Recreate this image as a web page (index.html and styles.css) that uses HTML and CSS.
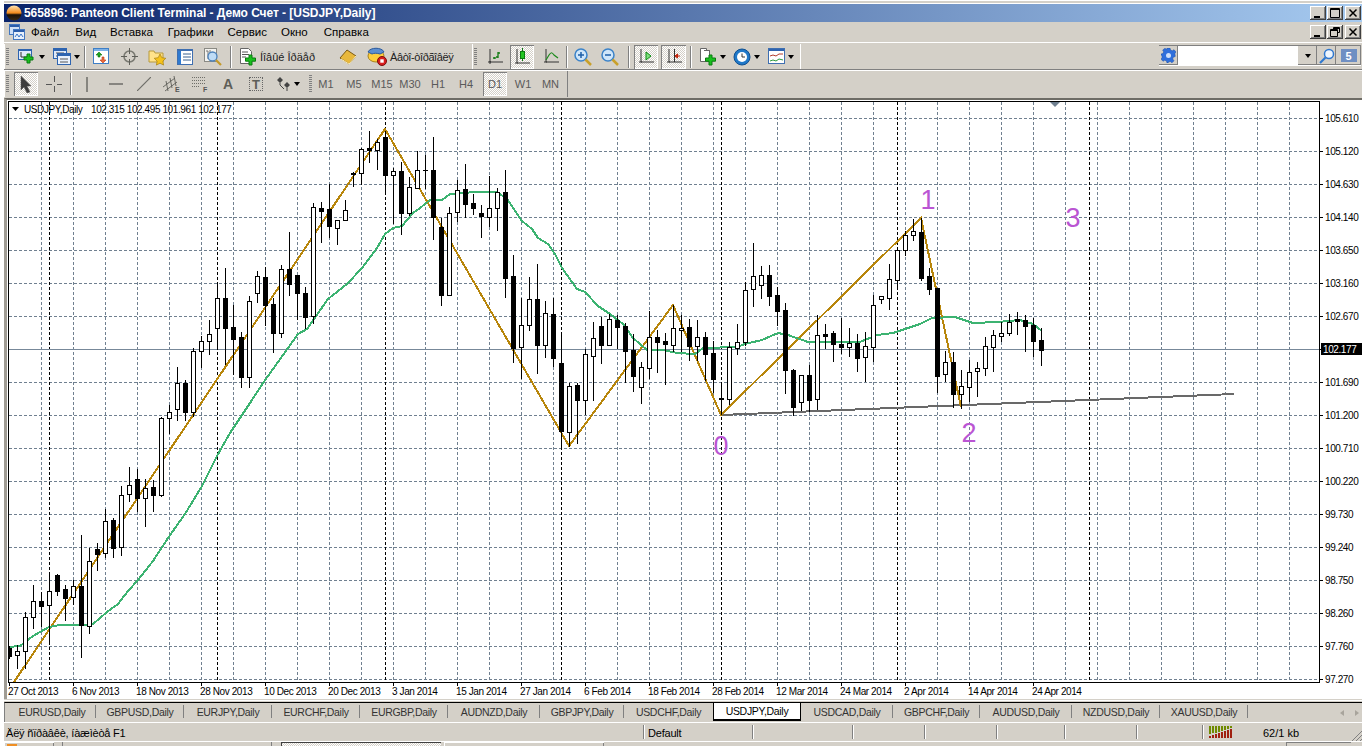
FILE: index.html
```html
<!DOCTYPE html>
<html lang="ru">
<head>
<meta charset="utf-8">
<title>565896: Panteon Client Terminal</title>
<link rel="stylesheet" href="styles.css">
</head>
<body>
<div class="frame-top"></div>
<div class="window">
  <header class="titlebar">
    <svg class="app-icon" width="16" height="16" viewBox="0 0 16 16"><defs><linearGradient id="og" x1="0" y1="0" x2="0" y2="1"><stop offset="0" stop-color="#ffe2b0"/><stop offset=".5" stop-color="#f28a1c"/><stop offset=".62" stop-color="#1b1208"/><stop offset="1" stop-color="#3a2a14"/></linearGradient></defs><ellipse cx="8" cy="8" rx="7.5" ry="7.5" fill="url(#og)"/></svg>
    <span class="title-text">565896: Panteon Client Terminal - Демо Счет - [USDJPY,Daily]</span>
    <div class="winbtns">
      <span class="winbtn"><svg width="14" height="12" viewBox="0 0 14 12"><path d="M3 9h6v2H3z" fill="#000"/></svg></span>
      <span class="winbtn"><svg width="14" height="12" viewBox="0 0 14 12"><path d="M2.5 1.500h9v9h-9zM2.500 2.500h9" fill="none" stroke="#000"/></svg></span>
      <span class="winbtn"><svg width="14" height="12" viewBox="0 0 14 12"><path d="M3.500 2.500l7 7M10.500 2.500l-7 7" stroke="#000" stroke-width="1.500"/></svg></span>
    </div>
  </header>

  <nav class="menubar">
    <svg class="mdi-icon" width="16" height="16" viewBox="0 0 16 16"><rect x=".5" y=".5" width="10" height="10" fill="#cfe0f7" stroke="#4478c0"/><path d="M1 2h9" stroke="#2a5caa" stroke-width="2"/><rect x="4.500" y="5.500" width="11" height="10" fill="#e8f0fb" stroke="#4478c0"/><path d="M5 7h10" stroke="#2a5caa" stroke-width="2"/><path d="M6 13l2-3 2 3 2-3 2 3" fill="none" stroke="#3a76c8"/></svg>
    <span class="mi m1">Файл</span><span class="mi m2">Вид</span><span class="mi m3">Вставка</span><span class="mi m4">Графики</span><span class="mi m5">Сервис</span><span class="mi m6">Окно</span><span class="mi m7">Справка</span>
    <div class="winbtns mdi">
      <span class="winbtn"><svg width="14" height="12" viewBox="0 0 14 12"><path d="M3 9h6v2H3z" fill="#000"/></svg></span>
      <span class="winbtn"><svg width="14" height="12" viewBox="0 0 14 12"><path d="M5.500 3.500V1.500h6v5h-2M2.500 3.500h7v7h-7zM2.500 4.500h7M5.500 2.500h6" fill="none" stroke="#000"/></svg></span>
      <span class="winbtn"><svg width="14" height="12" viewBox="0 0 14 12"><path d="M3.500 2.500l7 7M10.500 2.500l-7 7" stroke="#000" stroke-width="1.500"/></svg></span>
    </div>
  </nav>

  <div class="row row1">
    <div class="group g-main">
      <span class="handle"></span>
      <span class="tool w35"><svg width="18" height="16" viewBox="0 0 18 16"><rect x=".5" y=".5" width="13" height="10" fill="#dfeafa" stroke="#2e64b0"/><path d="M1 1.500h12" stroke="#2e64b0"/><path d="M3 3v5h7" fill="none" stroke="#333"/><path d="M9 5h3v3h3v3h-3v3H9v-3H6V8h3z" fill="#19c01e" stroke="#0a7a10"/></svg><i class="caret"></i></span>
      <span class="tool w35"><svg width="18" height="17" viewBox="0 0 18 17"><rect x=".5" y=".5" width="13" height="10" fill="#dfeafa" stroke="#2e64b0"/><path d="M1 2h12" stroke="#2e64b0" stroke-width="2"/><path d="M3 5h8M3 8h8" stroke="#555"/><rect x="4.500" y="5.500" width="13" height="11" fill="#e9f1fc" stroke="#2e64b0"/><path d="M5 7h12" stroke="#2e64b0" stroke-width="2"/><path d="M7 11h8M7 14h8" stroke="#555"/></svg><i class="caret"></i></span>
      <span class="sep"></span>
      <span class="tool w28"><svg width="17" height="17" viewBox="0 0 17 17"><rect x=".5" y=".5" width="15" height="15" fill="#fff" stroke="#3f7fc6"/><path d="M1 2h14" stroke="#7db1e6" stroke-width="2"/><path d="M5 9V7H3l3-3 3 3H7v2z" fill="#1da51d" stroke="#0e700e" stroke-width=".6"/><path d="M9 9v3H7l3 3 3-3h-2V9z" fill="#ee6a3c" stroke="#b53a10" stroke-width=".6"/></svg></span>
      <span class="tool w28"><svg width="17" height="17" viewBox="0 0 17 17"><circle cx="8.500" cy="8.500" r="5.500" fill="none" stroke="#7a7a72" stroke-width="1.500"/><path d="M8.500 0v6M8.500 11v6M0 8.500h6M11 8.500h6" stroke="#5e5e58"/></svg></span>
      <span class="tool w28"><svg width="19" height="18" viewBox="0 0 19 18"><path d="M1 3h5l1 2h8v9H1z" fill="#ffe28a" stroke="#b79a3c"/><path d="M12 6l1.800 3.700 4 .6-2.900 2.800.7 4-3.600-1.900-3.600 1.900.7-4-2.900-2.800 4-.6z" fill="#f5c21b" stroke="#a67f10" stroke-width=".7"/></svg></span>
      <span class="tool w28"><svg width="16" height="16" viewBox="0 0 16 16"><rect x=".5" y=".5" width="15" height="15" fill="#fff" stroke="#3f6fb0"/><path d="M1 1.500h14" stroke="#3f6fb0"/><path d="M1 2h3v13H1z" fill="#2f7ad0"/><path d="M6 5h8M6 8h8M6 11h8" stroke="#39618f"/></svg></span>
      <span class="tool w28"><svg width="18" height="18" viewBox="0 0 18 18"><rect x=".5" y=".5" width="12" height="13" fill="#f4f3ef" stroke="#8a8a84"/><path d="M2 3h2v8M6 2v7" stroke="#777" fill="none"/><circle cx="8.500" cy="8.500" r="4.500" fill="#bfdcf6" stroke="#4d82bb" stroke-width="1.300"/><path d="M12 12l5 5" stroke="#c49a2a" stroke-width="2.200"/></svg></span>
      <span class="sep ml3"></span>
      <span class="tool w85"><svg class="ic-l" width="18" height="18" viewBox="0 0 18 18"><path d="M1.500.5h8l3 3v12h-11z" fill="#fff" stroke="#666"/><path d="M3 4h6M3 6.500h7M3 9h4" stroke="#555"/><path d="M10 7h3v3h3.500v3.200H13V17h-3v-3.800H6.500V10H10z" fill="#19c01e" stroke="#0a7a10"/></svg><span class="tool-label lbl-order">Íîâûé Îðäåð</span></span>
      <span class="tool w30 ml15"><svg width="18" height="16" viewBox="0 0 18 16"><path d="M1 9l7-8 9 6-7 8z" fill="#e8b83c" stroke="#7d5a10"/><path d="M2 10l8 5 7-8" fill="none" stroke="#fff0b8"/></svg></span>
      <span class="tool w95"><svg class="ic-l" width="20" height="19" viewBox="0 0 20 19"><ellipse cx="9" cy="9" rx="8" ry="6" fill="#ffcf3d" stroke="#a8841b"/><path d="M1 5c2-5 14-5 16 0l-4 2c-3-1-6-1-8 0z" fill="#5d8fd0" stroke="#2c5a9c"/><circle cx="15" cy="14" r="4.500" fill="#d81e1e" stroke="#7b0c0c"/><rect x="13.300" y="12.300" width="3.400" height="3.400" fill="#fff"/></svg><span class="tool-label">Àâòî-òîðãîâëÿ</span></span>
    </div>
    <div class="group g-chart">
      <span class="handle"></span>
      <span class="tool w26"><svg width="16" height="16" viewBox="0 0 16 16"><path d="M3 0v13h13M1 13h3M3 15v-3" fill="none" stroke="#333"/><path d="M8 8V10M8 9h-2M11 3v6M11 4h2M11 8H9" fill="none" stroke="#107a10" stroke-width="1.300"/></svg></span>
      <span class="tool w24 on ml2"><svg width="16" height="18" viewBox="0 0 16 18"><path d="M3 1v14h13M1 15h3" fill="none" stroke="#333"/><path d="M8.500 0v13" stroke="#0a7a10"/><rect x="6.500" y="3.500" width="4" height="7" fill="#22c522" stroke="#0a7a10"/></svg></span>
      <span class="tool w27 ml3"><svg width="16" height="16" viewBox="0 0 16 16"><path d="M3 0v13h13M1 13h3" fill="none" stroke="#333"/><path d="M3 11l3-5c2-3 3-3 5 0l4 3" fill="none" stroke="#1b8a1b" stroke-width="1.200"/></svg></span>
      <span class="sep ml2"></span>
      <span class="tool w27"><svg width="18" height="18" viewBox="0 0 18 18"><circle cx="7" cy="7" r="6" fill="#cfe6fa" stroke="#3b83c9" stroke-width="1.500"/><path d="M4 7h6M7 4v6" stroke="#1e5fa8" stroke-width="1.500"/><path d="M11.500 11.500l5.500 5.500" stroke="#c9a02a" stroke-width="2.500"/></svg></span>
      <span class="tool w28"><svg width="18" height="18" viewBox="0 0 18 18"><circle cx="7" cy="7" r="6" fill="#cfe6fa" stroke="#3b83c9" stroke-width="1.500"/><path d="M4 7h6" stroke="#1e5fa8" stroke-width="1.500"/><path d="M11.500 11.500l5.500 5.500" stroke="#c9a02a" stroke-width="2.500"/></svg></span>
      <span class="sep ml4"></span>
      <span class="tool w24 on ml3"><svg width="16" height="16" viewBox="0 0 16 16"><path d="M3 0v13h13M1 13h3" fill="none" stroke="#333"/><path d="M8 3l5 4-5 4z" fill="#7fe07f" stroke="#0a8a10"/></svg></span>
      <span class="tool w25 on ml3"><svg width="16" height="16" viewBox="0 0 16 16"><path d="M3 0v13h13M1 13h3M8.500 0v13" fill="none" stroke="#333"/><path d="M9 7h5M11.500 5l-2.500 2 2.500 2z" fill="#e4351a" stroke="#c0240c"/></svg></span>
      <span class="sep ml4"></span>
      <span class="tool w32 ml3"><svg width="18" height="18" viewBox="0 0 18 18"><path d="M1.500.5h6v2h3v11h-9z" fill="#fff" stroke="#666"/><path d="M5 2.500h5.500v11" fill="none" stroke="#666"/><path d="M10 7h3v3h3.500v3.200H13V17h-3v-3.800H6.500V10H10z" fill="#19c01e" stroke="#0a7a10"/></svg><i class="caret"></i></span>
      <span class="tool w32 ml2"><svg width="18" height="18" viewBox="0 0 18 18"><circle cx="9" cy="9" r="8" fill="#1f78c8" stroke="#0f4f90"/><circle cx="9" cy="9" r="5" fill="#fff"/><path d="M9 5.500V9h3" fill="none" stroke="#333"/></svg><i class="caret"></i></span>
      <span class="tool w32 ml3"><svg width="17" height="17" viewBox="0 0 17 17"><rect x=".5" y=".5" width="16" height="15" fill="#fff" stroke="#3f6fb0"/><path d="M1 2h15" stroke="#2e64b0" stroke-width="2"/><path d="M2 8l3-1 3 1 3-2 4 0" fill="none" stroke="#b13c2c"/><path d="M2 13l3-1 3 1 3-2 4 1" fill="none" stroke="#2c9a3c"/></svg><i class="caret"></i></span>
    </div>
    <div class="search">
      <span class="sb-btn gear"><svg width="15" height="15" viewBox="0 0 15 15"><path d="M6 0h3l.5 2 1.800.8L13 1.700 15 4l-1.200 1.700.4 1.800 0 1-2 .8-.5 1.700 1.300 1.800-2 2-1.700-1.300-1.800.5L7 15H6l-.5-2-1.800-.8L2 13.300 0 11l1.200-1.700L.8 7.500 0 7V6l2-.5.600-1.700L1.700 2 4 .3l1.600 1.200z" fill="#2f6fdc" stroke="#1b4ea8" stroke-width=".5"/><circle cx="7.500" cy="7.500" r="2.500" fill="#cfe0fb"/></svg></span>
      <span class="sb-input"></span>
      <span class="sb-btn drop"><i class="caret"></i></span>
      <span class="sb-btn find"><svg width="16" height="16" viewBox="0 0 16 16"><circle cx="10" cy="6" r="4.500" fill="#eef5fd" stroke="#2f78d0" stroke-width="1.500"/><path d="M6.500 9.500L1 15" stroke="#2f78d0" stroke-width="2.200"/></svg></span>
      <span class="sb-btn chat"><span class="bubble">5</span></span>
    </div>
  </div>

  <div class="row row2">
    <div class="group g-tools">
      <span class="handle"></span>
      <span class="tool w24 on"><svg width="14" height="18" viewBox="0 0 14 18"><path d="M2 1v14l3-3 3 6 3-1-3-6h4z" fill="#3d3d3d" stroke="#555" stroke-width=".5"/></svg></span>
      <span class="tool w25 ml3"><svg width="16" height="16" viewBox="0 0 16 16"><path d="M8.500 0v6M8.500 10v6M0 8.500h6M11 8.500h5" stroke="#555"/></svg></span>
      <span class="sep ml4"></span>
      <span class="tool w28"><svg width="4" height="15" viewBox="0 0 4 15"><path d="M2 0v15" stroke="#5e5e58" stroke-width="1.300"/></svg></span>
      <span class="tool w28 ml1"><svg width="14" height="4" viewBox="0 0 14 4"><path d="M0 2h14" stroke="#5e5e58" stroke-width="1.300"/></svg></span>
      <span class="tool w28"><svg width="14" height="14" viewBox="0 0 14 14"><path d="M0 14L14 0" stroke="#6e6e68" stroke-width="1.200"/></svg></span>
      <span class="tool w28"><svg width="18" height="17" viewBox="0 0 18 17"><path d="M0 11l12-9M2 15L14 6M3 5l2 10M7 2l2 10M11 0l2 10" stroke="#5e5e58" stroke-width=".9"/><text x="12" y="16" class="ic-letter">E</text></svg></span>
      <span class="tool w28"><svg width="16" height="16" viewBox="0 0 16 16"><path d="M0 1.500h14M0 4.500h14M0 7.500h14M0 10.500h8" stroke="#6e6e68" stroke-dasharray="1 1"/><text x="11" y="15.500" class="ic-letter">F</text></svg></span>
      <span class="tool w28 letter-a">A</span>
      <span class="tool w28"><span class="t-box">T</span></span>
      <span class="tool w35"><svg width="15" height="14" viewBox="0 0 15 14"><path d="M4 0l3 3-3 3-3-3zM11 5l3 3-3 3-3-3z" fill="#444"/><path d="M4 6v2M4 8l4 4M11 11v3" stroke="#444"/></svg><i class="caret"></i></span>
      <span class="handle h-tight"></span>
      <span class="tool w28 tf">M1</span><span class="tool w28 tf">M5</span><span class="tool w28 tf">M15</span><span class="tool w28 tf">M30</span><span class="tool w28 tf">H1</span><span class="tool w28 tf">H4</span>
      <span class="tool w24 tf on ml3">D1</span><span class="tool w28 tf ml2">W1</span><span class="tool w27 tf">MN</span>
    </div>
  </div>

  <main class="chart-host">
    <svg class="chart" width="1355" height="599" viewBox="7 99 1355 599">
      <defs><clipPath id="plot"><rect x="9" y="101" width="1311" height="580"/></clipPath></defs>
      <g clip-path="url(#plot)">
        <g id="grid"></g>
        <path class="bid-line" d="M9 348.500H1320"/>
        <polyline class="trend" points="721,414 1234,393"/>
        <polyline class="zigzag" points="14,681 385,128 569,445 673,304 721,414 921,217 961,406"/>
        <polyline class="ma" points="9,646 20,645 33,635 49,626 60,624 83,624 93,623 107,611 118,603 128,590 138,579 153,560 168,537 185,513 202,485 217,455 230,432 252,399 263,382 273,368 288,347 298,333 307,328 328,298 347,283 362,267 377,247 385,233 393,227 402,225 413,212 420,207 430,199 442,199 450,193 463,192 475,191 497,191 507,198 522,220 532,228 538,237 548,243 555,253 562,267 577,288 585,291 598,305 610,313 623,323 633,337 647,349 663,349 677,352 695,353 703,347 737,346 745,343 762,339 778,332 788,334 808,341 823,341 860,341 877,334 893,332 920,323 932,317 955,316 973,322 997,321 1020,319 1033,323 1042,330"/>
        <g id="candles"></g>
        <polygon class="shift-mark" points="1050,101 1060,101 1055,106"/>
      </g>
      <rect class="plot-frame" x="8.500" y="100.500" width="1311" height="581"/>
      <g id="ticks"></g>
      <polygon points="12,106 19,106 15.500,110"/>
      <text class="ax" x="24" y="112">USDJPY,Daily</text>
      <text class="ax" x="91" y="112">102.315 102.495 101.961 102.177</text>
      <text class="mark" x="928" y="208" text-anchor="middle">1</text>
      <text class="mark" x="969" y="441" text-anchor="middle">2</text>
      <text class="mark" x="1073" y="226" text-anchor="middle">3</text>
      <text class="mark" x="721" y="454" text-anchor="middle">0</text>
      <g class="prices">
        <text class="ax" x="1325" y="121">105.610</text><text class="ax" x="1325" y="154">105.120</text><text class="ax" x="1325" y="187">104.630</text><text class="ax" x="1325" y="220">104.140</text><text class="ax" x="1325" y="253">103.650</text><text class="ax" x="1325" y="286">103.160</text><text class="ax" x="1325" y="319">102.670</text><text class="ax" x="1325" y="385">101.690</text><text class="ax" x="1325" y="418">101.200</text><text class="ax" x="1325" y="451">100.710</text><text class="ax" x="1325" y="484">100.220</text><text class="ax" x="1325" y="517">99.730</text><text class="ax" x="1325" y="550">99.240</text><text class="ax" x="1325" y="583">98.750</text><text class="ax" x="1325" y="616">98.260</text><text class="ax" x="1325" y="649">97.760</text><text class="ax" x="1325" y="682">97.270</text>
        <rect x="1321" y="342" width="41" height="12"/>
        <text class="ax bid-text" x="1323" y="352">102.177</text>
      </g>
      <g class="dates">
        <text class="ax" x="8" y="694">27 Oct 2013</text><text class="ax" x="72" y="694">6 Nov 2013</text><text class="ax" x="136" y="694">18 Nov 2013</text><text class="ax" x="200" y="694">28 Nov 2013</text><text class="ax" x="264" y="694">10 Dec 2013</text><text class="ax" x="328" y="694">20 Dec 2013</text><text class="ax" x="392" y="694">3 Jan 2014</text><text class="ax" x="456" y="694">15 Jan 2014</text><text class="ax" x="520" y="694">27 Jan 2014</text><text class="ax" x="584" y="694">6 Feb 2014</text><text class="ax" x="648" y="694">18 Feb 2014</text><text class="ax" x="712" y="694">28 Feb 2014</text><text class="ax" x="776" y="694">12 Mar 2014</text><text class="ax" x="840" y="694">24 Mar 2014</text><text class="ax" x="904" y="694">2 Apr 2014</text><text class="ax" x="968" y="694">14 Apr 2014</text><text class="ax" x="1032" y="694">24 Apr 2014</text>
      </g>
    </svg>
  </main>

  <div class="tabs-wrap">
    <div class="tabs">
      <span class="tab">EURUSD,Daily</span><span class="tab">GBPUSD,Daily</span><span class="tab">EURJPY,Daily</span><span class="tab">EURCHF,Daily</span><span class="tab">EURGBP,Daily</span><span class="tab w92t">AUDNZD,Daily</span><span class="tab w84t">GBPJPY,Daily</span><span class="tab w89t plain">USDCHF,Daily</span><span class="tab active">USDJPY,Daily</span><span class="tab w92t">USDCAD,Daily</span><span class="tab w87t">GBPCHF,Daily</span><span class="tab w92t">AUDUSD,Daily</span><span class="tab">NZDUSD,Daily</span><span class="tab">XAUUSD,Daily</span>
      <span class="tab-nav"><i class="tri-l"></i><i class="tri-r"></i></span>
    </div>
  </div>

  <footer class="status">
    <span class="cell c1">Äëÿ ñïðàâêè, íàæìèòå F1</span>
    <span class="cell c2">Default</span>
    <span class="cell c3"></span><span class="cell c4"></span><span class="cell c4"></span><span class="cell c5"></span><span class="cell c4"></span><span class="cell c6"></span>
    <span class="conn"><svg width="24" height="12" viewBox="0 0 24 12"><path d="M1 0h2v8H1zM4 0h2v7H4zM7 0h2v7H7zM10 0h2v6h-2zM13 0h2v5h-2zM16 0h2v4h-2zM19 0h2v3h-2zM22 0h2v2h-2z" fill="#6f8a00"/><path d="M1 10h2v2H1zM4 9h2v3H4zM7 8h2v4H7zM10 7h2v5h-2zM13 6h2v6h-2zM16 5h2v7h-2zM19 4h2v8h-2zM22 3h2v9h-2z" fill="#a02010"/></svg></span>
    <span class="traffic">62/1 kb</span>
    <svg class="grip" width="10" height="10" viewBox="0 0 10 10"><path d="M0 10L10 0M4 10l6-6M8 10l2-2" stroke="#808080"/></svg>
  </footer>

  <div class="taskbar">
    <span class="tb-item t-a"><i class="t-dot"></i></span>
    <span class="tb-mark t-b"></span>
    <span class="tb-item t-sel"></span>
    <span class="tb-item t-c"></span>
    <span class="tb-item t-d"></span>
  </div>
</div>
<script src="chart.js"></script>
</body>
</html>
```
FILE: styles.css
```css
* { box-sizing: border-box; }
html, body { margin: 0; height: 100%; background: #fff; overflow: hidden; }
body { font-family: "Liberation Sans", Arial, sans-serif; font-size: 11px; color: #000; }

.frame-top { height: 2px; margin: 1px 6px 1px 4px; background: #d4d0c8; }
.window { width: 1358px; height: 742px; margin-left: 4px; background: #d4d0c8; overflow: hidden; }

/* title */
.titlebar { height: 18px; display: flex; align-items: center; padding-left: 2px; background: linear-gradient(90deg, #0a246a, #a6caf0); }
.app-icon { flex: none; }
.title-text { margin-left: 2px; font-family: "Liberation Sans", sans-serif; font-weight: 700; font-size: 12px; letter-spacing: -.05px; color: #fff; white-space: nowrap; }
.winbtns { display: flex; margin-left: auto; margin-right: 1px; gap: 2px; }
.winbtn { width: 16px; height: 14px; display: flex; align-items: center; justify-content: center; background: #d4d0c8; box-shadow: inset -1px -1px #404040, inset 1px 1px #fff, inset -2px -2px #808080; }
.winbtn:first-child { margin-right: -1px; }

/* menu */
.menubar { height: 20px; display: flex; align-items: center; position: relative; border-bottom: 0; }
.mdi-icon { margin-left: 5px; flex: none; }
.mi { font-size: 11.500px; color: #000; white-space: nowrap; }
.m1 { margin-left: 6px; } .m2 { margin-left: 16px; } .m3 { margin-left: 14px; } .m4 { margin-left: 15px; }
.m5 { margin-left: 14px; } .m6 { margin-left: 14px; } .m7 { margin-left: 16px; }

/* toolbars */
.row { display: flex; }
.row1 { height: 28px; border-top: 1px solid #fff; border-bottom: 1px solid #808080; padding-top: 1px; box-shadow: 0 1px #fff; position: relative; }
.row2 { height: 26px; margin-top: 1px; padding-top: 0; }
.group { display: flex; align-items: center; height: 100%; }
.g-main { width: 468px; border-left: 1px solid #fff; }
.g-chart { width: 329px; border-left: 1px solid #fff; border-right: 1px solid #fff; }
.g-tools { width: 564px; border-left: 1px solid #fff; border-right: 1px solid #808080; }
.handle { flex: none; width: 9px; height: 18px; background: repeating-linear-gradient(180deg, #808080 0 1px, #d4d0c8 1px 2px) 1px 0 / 3px 100% no-repeat; }
.h-tight { width: 7px; background-position: 4px 0; }

.tool { flex: none; height: 24px; display: flex; align-items: center; justify-content: center; gap: 3px; }
.tool.on { background: repeating-conic-gradient(#fff 0 25%, #d4d0c8 0 50%) 0 0 / 2px 2px; box-shadow: inset 1px 1px #808080, inset -1px -1px #fff; }
.w24 { width: 24px; } .w25 { width: 25px; } .w26 { width: 26px; } .w27 { width: 27px; } .w28 { width: 28px; }
.w30 { width: 30px; } .w32 { width: 32px; } .w35 { width: 35px; } .w85 { width: 85px; justify-content: flex-start; padding-left: 6px; } .w95 { width: 95px; justify-content: flex-start; padding-left: 4px; }
.ml1 { margin-left: 1px; } .ml2 { margin-left: 2px; } .ml3 { margin-left: 3px; } .ml4 { margin-left: 4px; } .ml15 { margin-left: 15px; }
.sep { flex: none; width: 3px; height: 22px; border-left: 1px solid #808080; box-shadow: 1px 0 #fff inset; }
.caret { flex: none; width: 0; height: 0; border: 3.500px solid transparent; border-top: 4px solid #000; border-bottom: 0; }
.tool-label { font-size: 11px; color: #222; letter-spacing: -.4px; white-space: nowrap; }
.lbl-order { letter-spacing: 0; }
.ic-letter { font: 700 7px "Liberation Sans", sans-serif; fill: #555; }
.letter-a { font-size: 14px; font-weight: 700; color: #5e5e58; }
.t-box { width: 14px; height: 14px; display: flex; align-items: center; justify-content: center; border: 1px dotted #666; font-size: 13px; font-weight: 700; color: #5e5e58; }
.tf { font-size: 11px; color: #5a5a5a; }

/* search */
.search { margin-left: auto; margin-right: 1px; margin-top: 1px; height: 21px; width: 202px; display: flex; border-top: 1px solid #808080; border-bottom: 1px solid #fff; }
.sb-btn { flex: none; display: flex; align-items: center; justify-content: center; height: 100%; background: #d4d0c8; box-shadow: inset -1px -1px #808080; }
.gear { width: 19px; }
.sb-input { flex: 1; background: #fff; }
.drop { width: 19px; }
.find { width: 19px; }
.chat { width: 25px; }
.bubble { width: 16px; height: 13px; display: flex; align-items: center; justify-content: center; background: #6f8fc3; color: #fff; font-weight: 700; font-size: 11px; }

/* chart */
.chart-host { height: 601px; margin-top: 1px; border-top: 2px solid #6e6c66; border-left: 3px solid #a09c94; background: #fff; overflow: hidden; }
.chart { display: block; }
.chart text { font-family: "Liberation Sans", Arial, sans-serif; }
.ax { font-size: 10px; letter-spacing: -.4px; fill: #000; white-space: pre; }
.bid-text { fill: #fff; }
.mark { font-size: 27px; fill: #ba55d3; }
.plot-frame { fill: none; stroke: #000; shape-rendering: crispEdges; }
.bid-line { stroke: #778899; fill: none; shape-rendering: crispEdges; }
.grid-line { stroke: #708090; fill: none; stroke-dasharray: 3 2; shape-rendering: crispEdges; }
.sep-line { stroke: #000; fill: none; stroke-dasharray: 3 2; shape-rendering: crispEdges; }
.trend { stroke: #696969; stroke-width: 2; fill: none; shape-rendering: crispEdges; }
.zigzag { stroke: #b8860b; stroke-width: 2; fill: none; shape-rendering: crispEdges; stroke-linejoin: miter; }
.ma { stroke: #3cb371; stroke-width: 2; fill: none; shape-rendering: crispEdges; }
.shift-mark { fill: #708090; }
#candles, #ticks { shape-rendering: crispEdges; }

/* tabs */
.tabs-wrap { margin-top: 1px; border-top: 1px solid #fff; padding-top: 1px; }
.tabs { height: 20px; display: flex; align-items: flex-start; padding-left: 3px; border-top: 1px solid #000; border-left: 1px solid #808080; position: relative; }
.tab { flex: none; width: 88px; height: 17px; display: flex; align-items: center; justify-content: center; font-size: 10.500px; color: #333; letter-spacing: -.3px; position: relative; white-space: nowrap; }
.tab::after { content: ""; position: absolute; right: 0; top: 2px; height: 13px; border-right: 1px solid #808080; }
.tab.plain::after, .tab.active::after { display: none; }
.w92t { width: 92px; } .w84t { width: 84px; } .w89t { width: 89px; } .w87t { width: 87px; }
.tab.active { height: 18px; padding-bottom: 1px; background: #fff; color: #000; border: 1px solid #000; border-top: 0; border-bottom-width: 2px; }
.tab-nav { position: absolute; right: 3px; top: 7px; display: flex; gap: 11px; }
.tri-l, .tri-r { width: 0; height: 0; border: 3px solid transparent; }
.tri-l { border-right: 4px solid #a8a49c; border-left: 0; }
.tri-r { border-left: 4px solid #a8a49c; border-right: 0; }

/* status */
.status { height: 18px; margin-top: 0; border-top: 1px solid #fff; border-bottom: 1px solid #fff; box-sizing: content-box; display: flex; align-items: center; position: relative; padding-top: 0; }
.cell { flex: none; height: 14px; display: flex; align-items: center; padding-top: 2px; font-size: 11px; color: #000; letter-spacing: -.2px; white-space: nowrap; border-right: 1px solid #808080; box-shadow: 1px 0 #fff; padding-left: 4px; }
.c1 { width: 640px; padding-left: 2px; }
.c2 { width: 109px; }
.c3 { width: 100px; } .c4 { width: 72px; } .c5 { width: 68px; } .c6 { width: 66px; }
.conn { margin-left: 5px; display: flex; }
.traffic { margin-left: 31px; font-size: 11px; padding-top: 2px; }
.grip { position: absolute; right: 0; bottom: 0; }

/* taskbar */
.taskbar { display: flex; height: 7px; align-items: flex-start; }
.tb-item { flex: none; height: 7px; box-shadow: inset 1px 1px #fff, inset -1px 0 #808080; }
.t-a { width: 50px; padding: 2px 0 0 3px; }
.t-dot { display: block; width: 10px; height: 5px; background: #ef8f24; }
.tb-mark { flex: none; margin-left: 8px; width: 210px; border-left: 1px solid #808080; height: 7px; border-right: 1px solid #808080; }
.t-sel { margin-left: 9px; width: 160px; background: repeating-conic-gradient(#fff 0 25%, #d4d0c8 0 50%) 0 0 / 2px 2px; box-shadow: inset 1px 1px #404040; }
.t-c { margin-left: 3px; width: 160px; }
.t-d { margin-left: 682px; width: 65px; box-shadow: inset 1px 1px #808080; }
```
FILE: chart.js
```js
// x = 9 + 8*i. Each candle: kind (B black / W white), body top, body bottom, high, low (pixels)
var data = [
["B",647,655,645,657],["W",650,654,644,667],["W",616,650,611,667],["W",600,616,584,627],["B",600,605,591,625],
["W",590,604,572,643],["B",574,590,573,594],["B",588,597,584,619],["W",585,596,579,603],["B",585,624,534,656],
["W",560,625,547,632],["B",548,553,542,569],["W",520,552,508,556],["B",519,547,517,556],["W",494,546,485,554],
["W",484,493,466,500],["B",478,497,468,510],["W",487,497,478,525],["B",486,494,479,510],["W",417,494,416,495],
["W",411,417,404,432],["W",382,408,366,419],["B",382,411,379,419],["W",350,411,347,415],["W",340,350,335,366],
["W",333,340,319,353],["W",297,327,284,348],["B",297,327,267,363],["B",326,338,304,373],["B",336,376,331,386],
["W",300,376,295,386],["W",275,292,270,301],["B",276,304,266,324],["B",303,332,297,351],["W",268,332,264,336],
["B",268,283,231,294],["B",274,292,274,318],["B",292,316,286,327],["W",206,315,202,322],["B",207,210,201,241],
["B",208,225,183,236],["W",219,227,219,243],["W",209,219,199,219],["B",172,173,171,185],["W",148,172,147,183],
["B",147,149,130,161],["W",141,149,138,168],["B",136,174,130,193],["W",170,174,167,222],["B",170,212,161,233],
["W",186,212,176,214],["W",169,187,150,187],["B",169,169,154,187],["B",169,216,136,238],["B",226,294,217,304],
["W",212,294,206,294],["W",189,211,179,220],["B",188,203,163,216],["B",202,207,193,213],["B",212,215,204,236],
["W",207,216,175,225],["W",191,207,187,229],["B",191,277,169,296],["B",275,347,254,361],["W",324,346,297,377],
["W",298,324,276,329],["B",298,344,263,372],["W",312,344,300,356],["B",313,357,297,365],["B",362,430,333,445],
["W",385,431,382,445],["B",384,399,382,442],["W",353,399,348,413],["W",337,355,321,399],["B",325,344,316,362],
["W",318,344,313,344],["B",319,326,314,347],["B",325,350,322,381],["B",349,375,333,390],["W",366,386,361,402],
["W",336,367,310,377],["B",336,341,329,371],["B",340,343,332,383],["W",327,344,304,350],["W",327,329,314,350],
["B",326,345,318,359],["W",336,345,319,359],["B",336,353,331,379],["B",352,378,340,391],["B",397,398,382,413],
["W",346,398,341,403],["W",341,347,323,353],["W",289,341,281,344],["W",275,288,242,305],["W",274,284,265,297],
["B",274,295,264,304],["B",294,310,286,324],["B",309,369,302,392],["B",369,406,368,414],["W",374,401,374,409],
["B",374,399,364,410],["W",334,398,314,408],["B",333,335,323,347],["B",332,343,330,360],["B",343,346,317,352],
["W",342,346,327,355],["B",342,357,333,370],["W",345,356,331,380],["W",304,346,294,360],["W",295,298,295,302],
["W",278,297,263,308],["W",249,279,249,288],["W",234,249,230,254],["W",230,234,218,239],["B",231,277,217,279],
["B",275,288,267,293],["B",287,375,287,391],["W",361,373,350,380],["B",361,393,351,406],["W",385,393,369,407],
["W",371,386,359,400],["W",367,370,361,395],["W",345,367,336,374],["W",334,346,329,370],["W",332,335,321,340],
["W",321,332,313,334],["B",318,320,311,333],["B",319,325,314,350],["B",324,340,317,355],["B",339,349,327,364]
];

var NS = "http://www.w3.org/2000/svg";
function add(parent, tag, attrs) {
  var el = document.createElementNS(NS, tag);
  for (var k in attrs) el.setAttribute(k, attrs[k]);
  parent.appendChild(el);
  return el;
}
function rectPath(x, y, w, h) { return "M" + x + " " + y + "h" + w + "v" + h + "h" + (-w) + "z"; }

var grid = document.getElementById("grid");
var d = "";
for (var y = 117; y <= 678; y += 33) { if (y !== 348) d += "M9 " + (y + 0.5) + "H1320"; }
for (var x = 41; x < 1320; x += 32) d += "M" + (x + 0.5) + " 101V681";
add(grid, "path", { "class": "grid-line", d: d });
var s = "";
[49, 217, 385, 561, 721, 897, 1089].forEach(function (px) { s += "M" + (px + 0.5) + " 101V681"; });
add(grid, "path", { "class": "sep-line", d: s });

var wicks = "", black = "", white = "";
data.forEach(function (c, i) {
  var cx = 9 + 8 * i;
  wicks += rectPath(cx, c[3], 1, c[4] - c[3] + 1);
  black += rectPath(cx - 2, c[1], 5, c[2] - c[1] + 1);
  if (c[0] === "W") white += rectPath(cx - 1, c[1] + 1, 3, Math.max(c[2] - c[1] - 1, 0));
});
var cg = document.getElementById("candles");
add(cg, "path", { d: wicks, fill: "#000" });
add(cg, "path", { d: black, fill: "#000" });
add(cg, "path", { d: white, fill: "#fff" });

var t = "";
for (var py = 117; py <= 678; py += 33) t += rectPath(1320, py, 3, 1);
for (var tx = 9; tx <= 1033; tx += 64) t += rectPath(tx, 682, 1, 3);
add(document.getElementById("ticks"), "path", { d: t, fill: "#000" });
```
